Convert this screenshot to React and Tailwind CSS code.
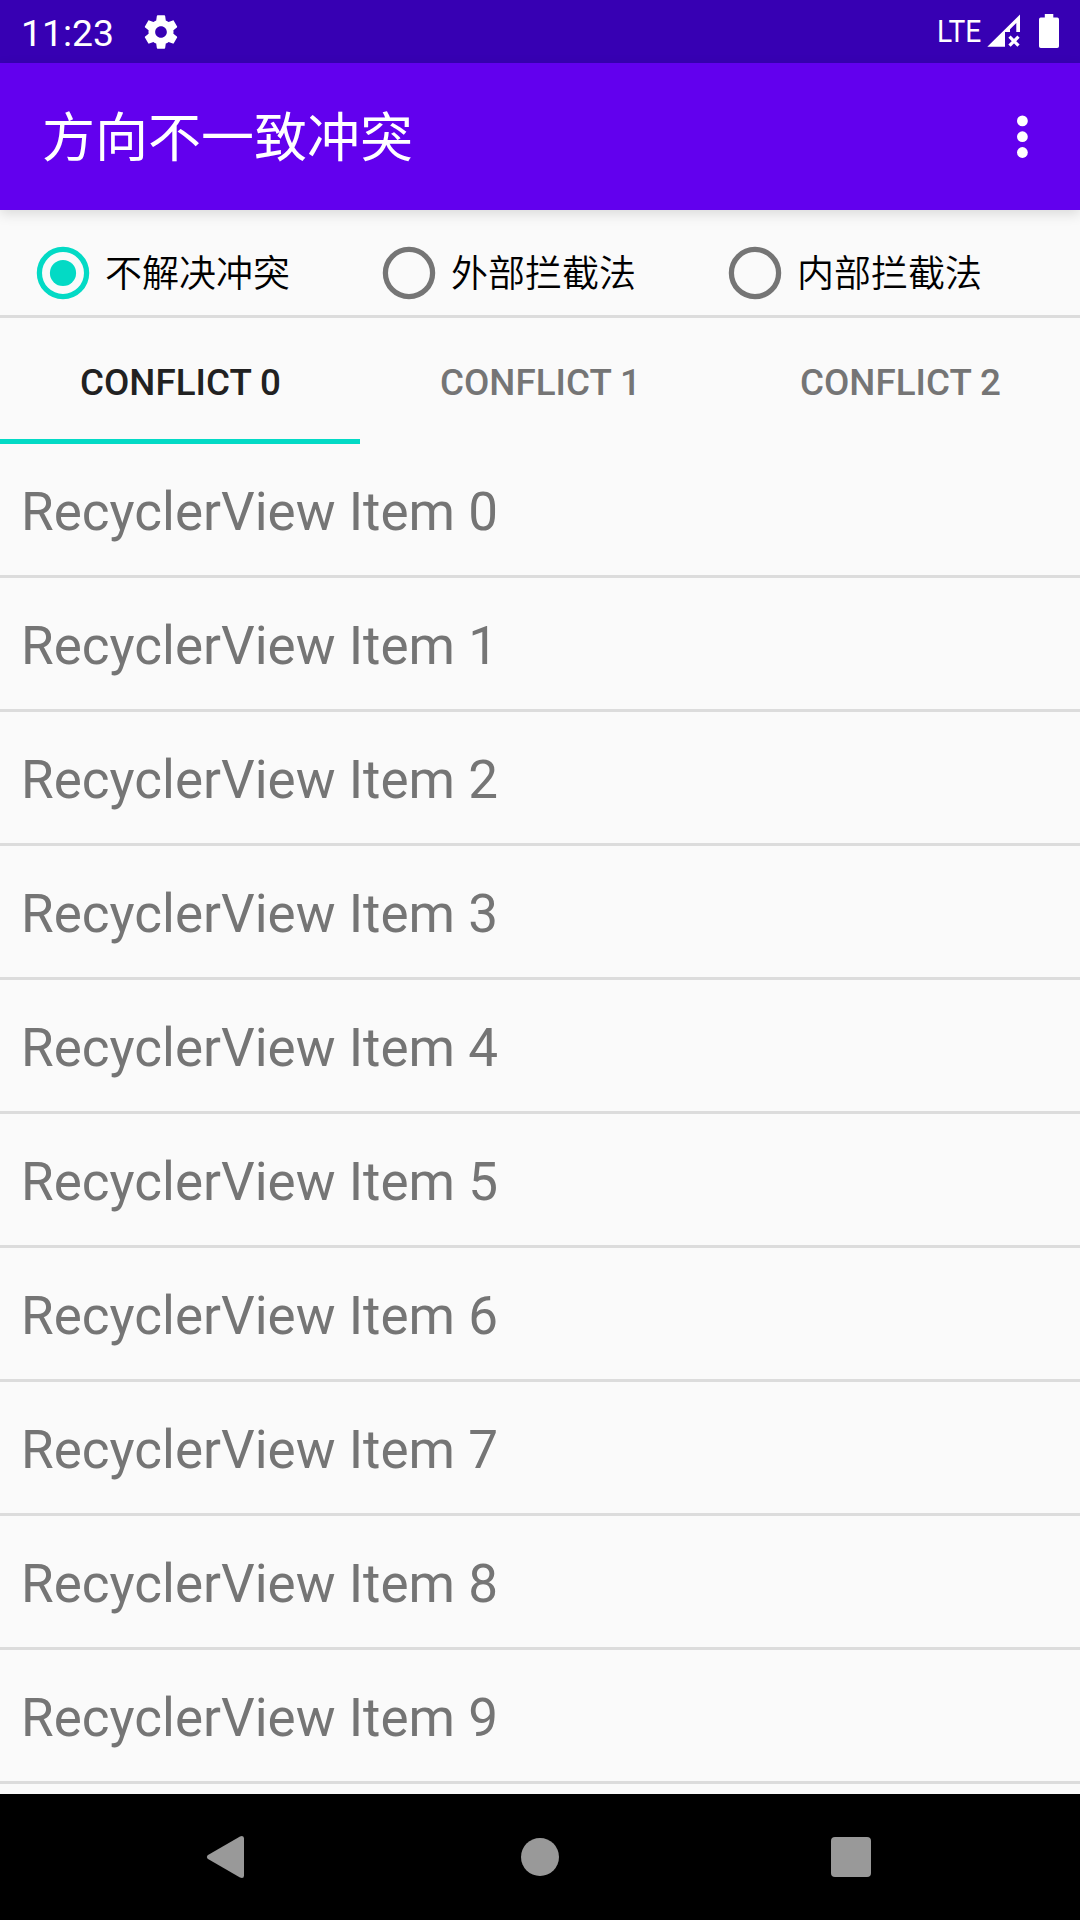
const GEAR =
  'M19.43 12.98c.04-.32.07-.64.07-.98s-.03-.66-.07-.98l2.11-1.65c.19-.15.24-.42.12-.64l-2-3.46c-.12-.22-.39-.3-.61-.22l-2.49 1c-.52-.4-1.08-.73-1.69-.98l-.38-2.65C14.46 2.18 14.25 2 14 2h-4c-.25 0-.46.18-.49.42l-.38 2.65c-.61.25-1.17.59-1.69.98l-2.49-1c-.23-.09-.49 0-.61.22l-2 3.46c-.13.22-.07.49.12.64l2.11 1.65c-.04.32-.07.65-.07.98s.03.66.07.98l-2.11 1.65c-.19.15-.24.42-.12.64l2 3.46c.12.22.39.3.61.22l2.49-1c.52.4 1.08.73 1.69.98l.38 2.65c.03.24.24.42.49.42h4c.25 0 .46-.18.49-.42l.38-2.65c.61-.25 1.17-.59 1.69-.98l2.49 1c.23.09.49 0 .61-.22l2-3.46c.12-.22.07-.49-.12-.64l-2.11-1.65zM12 15.5c-1.93 0-3.5-1.57-3.5-3.5s1.57-3.5 3.5-3.5 3.5 1.57 3.5 3.5-1.57 3.5-3.5 3.5z';

function StatusBar() {
  return (
    <header className="flex h-[63px] items-start justify-between bg-[#3700b3] text-white">
      <div className="flex items-start pl-[21px]">
        <span className="mt-[11px] w-[120px] text-[37.3px] leading-[44px]">11:23</span>
        <svg className="mt-[11.5px] size-10" viewBox="0 0 24 24" fill="currentColor">
          <path d={GEAR} />
        </svg>
      </div>
      <div className="flex items-start pr-[21px]">
        <span className="mt-[12px] w-[50px] origin-left scale-x-[0.88] whitespace-nowrap text-[32px] leading-[38px]">
          LTE
        </span>
        <svg className="mt-[14px] h-[34px] w-[34px]" viewBox="987 14 34 34" fill="currentColor">
          <path d="M987.3 46.8 1020 14.5V32h-3.7v-9l-6.3 6.3V32h-5v14.8z" />
          <path d="m1009.5 36.700 9 9m0-9-9 9" stroke="currentColor" strokeWidth="3.2" />
        </svg>
        <svg className="mt-[14px] ml-[18px] h-[34px] w-5" viewBox="0 0 20 34" fill="currentColor">
          <path d="M5.8 0h8.5v3.6h3.9q1.8 0 1.8 1.8v26.8q0 1.8-1.8 1.8H1.8Q0 34 0 32.200V5.400Q0 3.600 1.800 3.600h4z" />
        </svg>
      </div>
    </header>
  );
}

function AppBar() {
  return (
    <div className="relative z-10 flex h-[147px] items-center justify-between bg-[#6200ee] pr-[52px] pl-[42px] text-white shadow-[0_4px_12px_rgba(0,0,0,0.13)]">
      <h1 className="pt-[5px] text-[53px] leading-[76px] font-normal">方向不一致冲突</h1>
      <svg className="h-[44px] w-[12px]" viewBox="0 0 12 44" fill="currentColor">
        <circle cx="6.400" cy="5.900" r="5.400" />
        <circle cx="6.400" cy="21.700" r="5.400" />
        <circle cx="6.400" cy="37.500" r="5.400" />
      </svg>
    </div>
  );
}

function Radio({ label, checked }) {
  return (
    <label className="flex w-[346px] items-center">
      <svg
        className={checked ? 'size-[54px] text-[#03dac5]' : 'size-[54px] text-[#757575]'}
        viewBox="0 0 54 54"
      >
        <circle cx="27" cy="27" r="23.6" fill="none" stroke="currentColor" strokeWidth="5.25" />
        {checked && <circle cx="27" cy="27" r="13.1" fill="currentColor" />}
      </svg>
      <span className="-mb-[2px] ml-[15px] pt-[2px] text-[37px] leading-[54px] font-[350] text-black">{label}</span>
    </label>
  );
}

function Tab({ label, active }) {
  return (
    <div
      className={
        active
          ? 'flex h-[126px] flex-1 items-center justify-center border-b-[5px] border-[#03dac5] text-[#212121]'
          : 'flex h-[126px] flex-1 items-center justify-center border-b-[5px] border-transparent text-[#757575]'
      }
    >
      <span className="pt-[7px] pl-px text-[36.75px] leading-[43px] font-medium">{label}</span>
    </div>
  );
}

function NavBar() {
  return (
    <nav className="flex h-[126px] items-center bg-black pl-[206px] text-[#999999]">
      <svg className="h-[44px] w-[40px]" viewBox="0 0 40 44" fill="currentColor">
        <path d="M1.600 20.200 34 1.400Q38 0 38 3.500v37Q38 44 34 42.600L1.600 23.800Q0 22 1.600 20.200z" />
      </svg>
      <span className="ml-[275px] size-[38px] rounded-full bg-current" />
      <span className="ml-[272px] size-10 rounded-[4px] bg-current" />
    </nav>
  );
}

export default function App() {
  const items = Array.from({ length: 10 }, (_, i) => `RecyclerView Item ${i}`);
  return (
    <div className="flex h-[1920px] w-[1080px] flex-col overflow-hidden bg-[#fafafa] font-['Roboto','Noto_Sans_CJK_SC',sans-serif]">
      <StatusBar />
      <AppBar />
      <div className="flex h-[108px] items-center border-b-[3px] border-[#dcdcdc] pt-[21px] pl-9">
        <Radio label="不解决冲突" checked />
        <Radio label="外部拦截法" />
        <Radio label="内部拦截法" />
      </div>
      <div className="flex">
        <Tab label="CONFLICT 0" active />
        <Tab label="CONFLICT 1" />
        <Tab label="CONFLICT 2" />
      </div>
      <ul className="flex-1">
        {items.map((item) => (
          <li
            key={item}
            className="flex h-[134px] items-center border-b-[3px] border-[#dcdcdc] pt-[4px] pl-[21px] text-[53px] leading-[62px] text-[#757575]"
          >
            {item}
          </li>
        ))}
      </ul>
      <NavBar />
    </div>
  );
}
